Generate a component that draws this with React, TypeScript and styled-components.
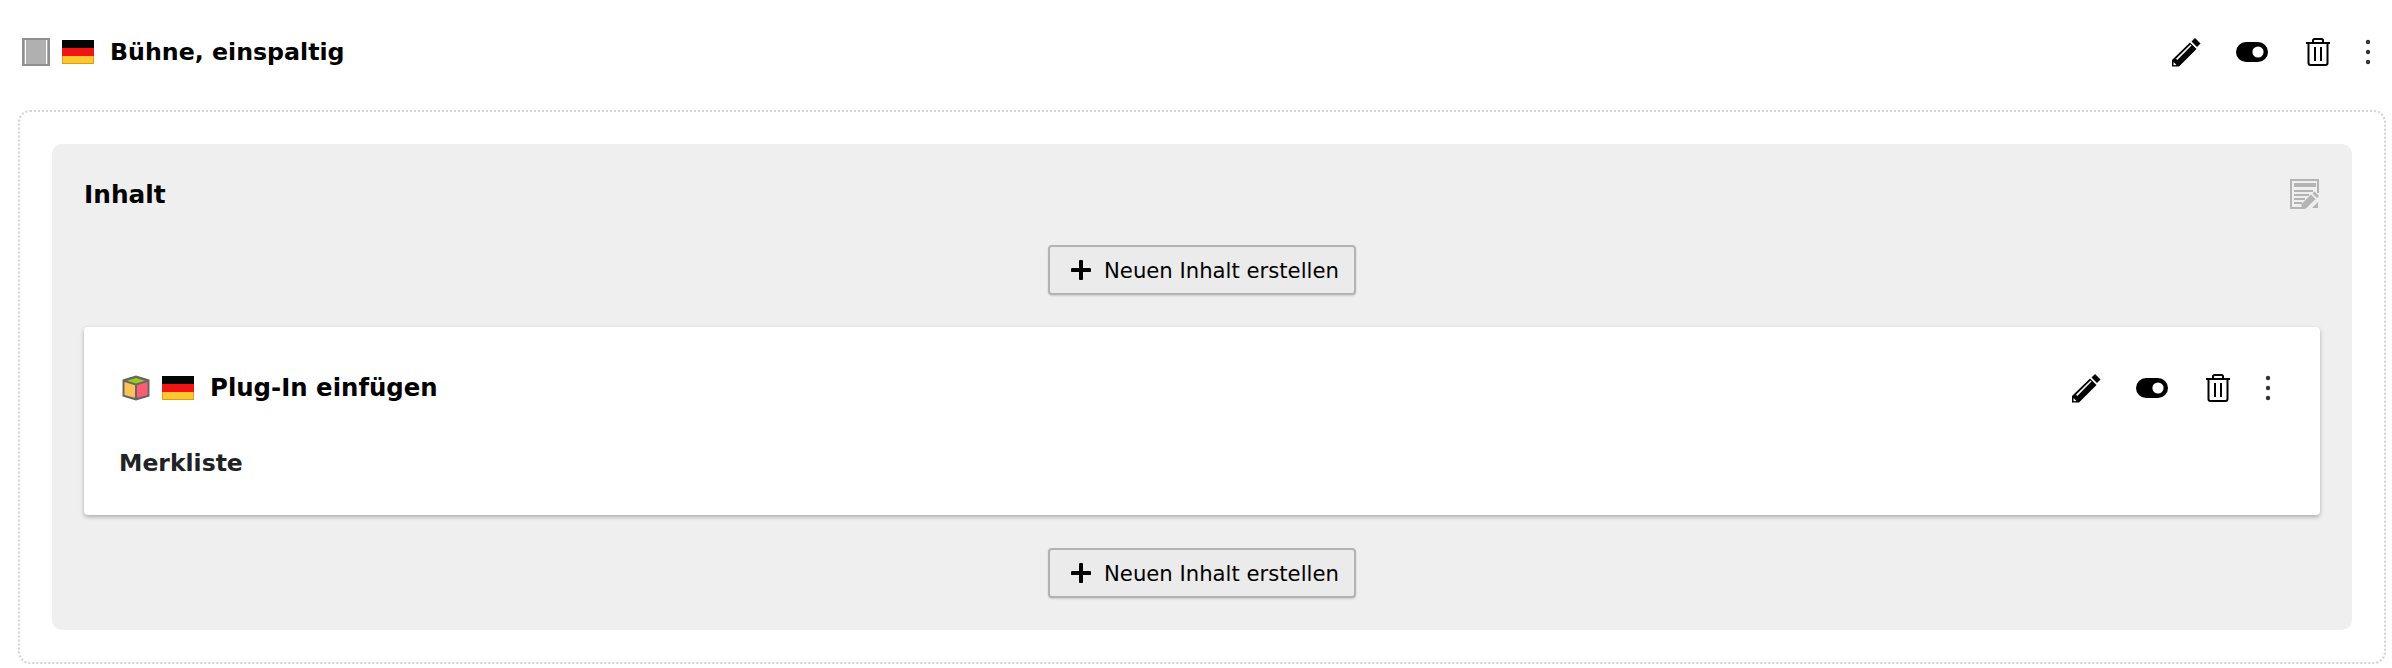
import React from "react";
import styled, { createGlobalStyle } from "styled-components";

const GlobalStyle = createGlobalStyle`
  html, body {
    margin: 0;
    padding: 0;
    background: #fff;
    font-family: "DejaVu Sans", Verdana, sans-serif;
    color: #000;
  }
`;

const Page = styled.div`
  width: 2392px;
  height: 668px;
  overflow: hidden;
  box-sizing: border-box;
  padding: 28px 6px 0 18px;
`;

const Header = styled.div`
  display: flex;
  align-items: center;
  height: 48px;
`;

const TopHeader = styled(Header)`
  margin: 0 1px 34px 4px;
`;

const Icons = styled.div`
  display: flex;
  align-items: center;
  gap: 12px;
  margin-right: 16px;
`;

const Title = styled.span<{ $size: number }>`
  font-size: ${(p) => p.$size}px;
  font-weight: 700;
  line-height: 32px;
  flex: 1;
`;

const Actions = styled.div`
  display: flex;
  align-items: center;
`;

const ActionButton = styled.button<{ $narrow?: boolean }>`
  width: ${(p) => (p.$narrow ? 34 : 66)}px;
  height: 48px;
  padding: 0;
  border: 0;
  background: none;
  display: flex;
  align-items: center;
  justify-content: center;
  cursor: pointer;
`;

const Outer = styled.div`
  box-sizing: border-box;
  height: 554px;
  border: 2px dotted #d4d4d4;
  border-radius: 12px;
  padding: 32px;
`;

const Column = styled.div`
  box-sizing: border-box;
  height: 486px;
  background: #efefef;
  border-radius: 10px;
  padding: 32px 32px 0;
`;

const ColumnHead = styled.div`
  display: flex;
  align-items: center;
  justify-content: space-between;
  height: 36px;
`;

const ColumnTitle = styled.span`
  padding-top: 1px;
  font-size: 24.8px;
  font-weight: 700;
  line-height: 32px;
`;

const AddRow = styled.div<{ $top: number; $bottom: number }>`
  display: flex;
  justify-content: center;
  margin-top: ${(p) => p.$top}px;
  margin-bottom: ${(p) => p.$bottom}px;
`;

const AddButton = styled.button`
  box-sizing: border-box;
  width: 308px;
  height: 50px;
  display: flex;
  align-items: center;
  padding: 0 0 0 21px;
  gap: 13px;
  background: #ebebeb;
  border: 2px solid #b3b3b3;
  border-radius: 4px;
  box-shadow: 0 1px 2px rgba(0, 0, 0, 0.15);
  font-family: inherit;
  font-size: 21.2px;
  color: #000;
  white-space: nowrap;
  cursor: pointer;
`;

const Card = styled.div`
  box-sizing: border-box;
  height: 188px;
  background: #fff;
  border-radius: 4px;
  box-shadow: 0 2px 4px rgba(0, 0, 0, 0.28);
  padding: 37px 35px 0;
`;

const CardHeader = styled(Header)`
  margin-left: 3px;
`;

const Body = styled.div`
  margin-top: 35px;
  font-size: 23.5px;
  font-weight: 700;
  line-height: 32px;
  color: #1f2326;
`;

const PencilIcon = () => (
  <svg width="30" height="30" viewBox="0 0 30 30">
    <path d="M19 5.5l6.5 6.500L8 29.500H1V23z" fill="#000" />
    <path d="M24 1l5.500 5.500L26 10l-5.500-5.500z" fill="#000" />
    <path d="M5 21.800L19.500 7.500l1 1L6.300 23z" fill="#fff" />
    <path d="M2.500 25l3 3-3 .3z" fill="#fff" />
  </svg>
);

const ToggleIcon = () => (
  <svg width="32" height="20" viewBox="0 0 32 20">
    <rect width="32" height="20" rx="10" fill="#000" />
    <circle cx="22" cy="10" r="5.6" fill="#fff" />
  </svg>
);

const TrashIcon = () => (
  <svg width="24" height="28" viewBox="0 0 24 28" fill="none" stroke="#000">
    <path d="M0 5h24" strokeWidth="2" />
    <path d="M7 5V2.500C7 1.600 7.700 1 8.500 1h7c.8 0 1.500.6 1.500 1.500V5" strokeWidth="2" />
    <path d="M2.500 5v20c0 1.200.8 2 2 2h15c1.200 0 2-.8 2-2V5" strokeWidth="2" />
    <path d="M9 9v14M15 9v14" strokeWidth="2" />
  </svg>
);

const DotsIcon = () => (
  <svg width="6" height="26" viewBox="0 0 6 26">
    <circle cx="3" cy="3" r="2.2" fill="#333" />
    <circle cx="3" cy="13" r="2.2" fill="#333" />
    <circle cx="3" cy="23" r="2.2" fill="#333" />
  </svg>
);

const Flag = () => (
  <svg width="32" height="24" viewBox="0 0 32 24">
    <rect width="32" height="8" fill="#050505" />
    <rect y="8" width="32" height="8" fill="#f01414" />
    <rect y="16" width="32" height="8" fill="#ffc72c" />
    <path d="M.5 16v7.500h31V16" fill="none" stroke="#cf9f1f" />
  </svg>
);

const ContainerIcon = () => (
  <svg width="28" height="28" viewBox="0 0 28 28">
    <rect x="1" y="1" width="26" height="26" fill="#b0b0b0" stroke="#8f8f8f" strokeWidth="2" />
    <path d="M3.500 2v24M24.500 2v24" stroke="#fff" strokeWidth="1" />
  </svg>
);

const CubeIcon = () => (
  <svg width="28" height="26" viewBox="0 0 28 26">
    <path d="M14 .5L27.500 4.500v17L14 25.500.5 21.500v-17z" fill="#666" />
    <path d="M14 3l9 2.800-9 2.800-9-2.800z" fill="#9ccc14" />
    <path d="M2.500 7l10.500 3.200v12.600L2.500 20z" fill="#ffc157" />
    <path d="M25.500 7L15 10.200v12.600L25.500 20z" fill="#ff5c74" />
  </svg>
);

const EditContentIcon = () => (
  <svg width="30" height="30" viewBox="0 0 30 30">
    <path d="M28 14V1H1v28h14" fill="none" stroke="#b4b4b4" strokeWidth="2" />
    <path d="M4 4h22v4H4zM4 11h19v2H4zM4 15h15v2H4zM4 19h11v2H4zM4 23h8v2H4z" fill="#b4b4b4" />
    <path d="M24.500 12.500l4.500 4.500-2 2-4.500-4.500zM21 15.500l4.500 4.500L16 29.500h-4.500V25z" fill="#b4b4b4" />
    <path d="M28 23v6h-6z" fill="#b4b4b4" />
  </svg>
);

const PlusIcon = () => (
  <svg width="20" height="20" viewBox="0 0 20 20">
    <path d="M10 1.500v17M1.500 10h17" stroke="#000" strokeWidth="4" strokeLinecap="round" />
  </svg>
);

const ElementActions = () => (
  <Actions>
    <ActionButton aria-label="Bearbeiten">
      <PencilIcon />
    </ActionButton>
    <ActionButton aria-label="Verbergen">
      <ToggleIcon />
    </ActionButton>
    <ActionButton aria-label="Löschen">
      <TrashIcon />
    </ActionButton>
    <ActionButton $narrow aria-label="Mehr">
      <DotsIcon />
    </ActionButton>
  </Actions>
);

const AddContent = () => (
  <AddButton>
    <PlusIcon />
    Neuen Inhalt erstellen
  </AddButton>
);

export default function App() {
  return (
    <>
      <GlobalStyle />
      <Page>
        <TopHeader>
          <Icons>
            <ContainerIcon />
            <Flag />
          </Icons>
          <Title $size={23.7}>Bühne, einspaltig</Title>
          <ElementActions />
        </TopHeader>
        <Outer>
          <Column>
            <ColumnHead>
              <ColumnTitle>Inhalt</ColumnTitle>
              <EditContentIcon />
            </ColumnHead>
            <AddRow $top={33} $bottom={32}>
              <AddContent />
            </AddRow>
            <Card>
              <CardHeader>
                <Icons>
                  <CubeIcon />
                  <Flag />
                </Icons>
                <Title $size={24.4}>Plug-In einfügen</Title>
                <ElementActions />
              </CardHeader>
              <Body>Merkliste</Body>
            </Card>
            <AddRow $top={33} $bottom={0}>
              <AddContent />
            </AddRow>
          </Column>
        </Outer>
      </Page>
    </>
  );
}
